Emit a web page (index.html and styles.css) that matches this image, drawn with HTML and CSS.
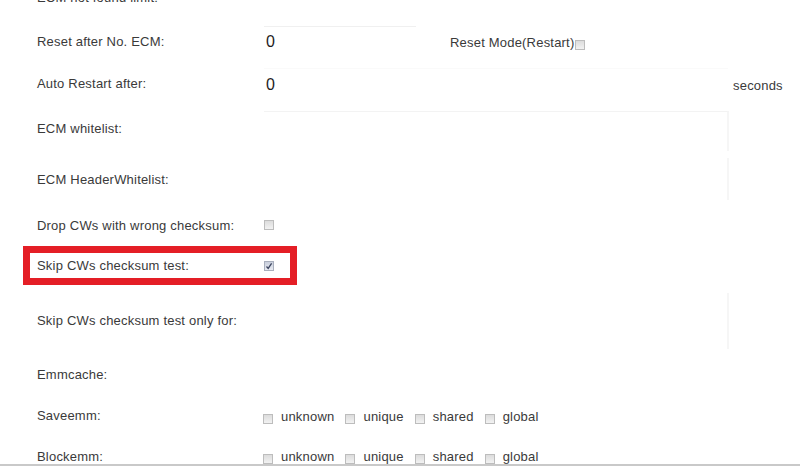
FILE: index.html
```html
<!DOCTYPE html>
<html>
<head>
<meta charset="utf-8">
<link rel="stylesheet" href="styles.css">
</head>
<body>
<div class="form">
  <div class="row r1"><span class="label">ECM not found limit:</span></div>
  <div class="row r2">
    <span class="label">Reset after No. ECM:</span>
    <span class="input short">0</span>
    <span class="mode">Reset Mode(Restart)<span class="cb low"></span></span>
  </div>
  <div class="row r3">
    <span class="label">Auto Restart after:</span>
    <span class="input long">0</span>
    <span class="unit">seconds</span>
  </div>
  <div class="row r4">
    <span class="label">ECM whitelist:</span>
    <span class="area a1"></span>
  </div>
  <div class="row r5">
    <span class="label">ECM HeaderWhitelist:</span>
    <span class="area a2"></span>
  </div>
  <div class="row r6">
    <span class="label">Drop CWs with wrong checksum:</span>
    <span class="cb"></span>
  </div>
  <div class="row r7">
    <div class="highlight">
      <span class="label">Skip CWs checksum test:</span>
      <span class="cb checked"><svg width="8" height="8" viewBox="0 0 8 8"><path d="M1.5 4.5 L3.2 6.4 L6.6 1.4" fill="none" stroke="#3d4660" stroke-width="1.3"/></svg></span>
    </div>
  </div>
  <div class="row r8">
    <span class="label">Skip CWs checksum test only for:</span>
    <span class="area a3"></span>
  </div>
  <div class="row r9"><span class="label">Emmcache:</span></div>
  <div class="row r10">
    <span class="label">Saveemm:</span>
    <div class="opts">
      <span class="opt"><span class="cb"></span>unknown</span>
      <span class="opt"><span class="cb"></span>unique</span>
      <span class="opt"><span class="cb"></span>shared</span>
      <span class="opt"><span class="cb"></span>global</span>
    </div>
  </div>
  <div class="row r11">
    <span class="label">Blockemm:</span>
    <div class="opts">
      <span class="opt"><span class="cb"></span>unknown</span>
      <span class="opt"><span class="cb"></span>unique</span>
      <span class="opt"><span class="cb"></span>shared</span>
      <span class="opt"><span class="cb"></span>global</span>
    </div>
  </div>
</div>
<div class="bottom-edge"></div>
</body>
</html>
```

FILE: styles.css
```css
html, body {
  margin: 0;
  padding: 0;
  background: #fff;
  overflow: hidden;
}
body {
  font-family: "Liberation Sans", Arial, sans-serif;
  font-size: 13px;
  color: #3a3a3a;
  letter-spacing: 0.2px;
}
.form {
  margin-top: -24px;
  padding-left: 37px;
}
.row {
  display: flex;
  align-items: center;
}
.label {
  flex: none;
  width: 227px;
  white-space: nowrap;
}
.r1 { height: 42px; }
.r2 { height: 46px; }
.r3 { height: 38px; }
.r4 { height: 52px; }
.r5 { height: 50px; }
.r6 { height: 42px; }
.r7 { height: 39px; }
.r8 { height: 70px; }
.r9 { height: 38px; }
.r10 { height: 44px; }
.r11 { height: 38px; }

.input {
  box-sizing: border-box;
  height: 30px;
  border-top: 1px solid #f0f0f0;
  font-size: 16px;
  color: #1e1e1e;
  letter-spacing: 0;
  display: flex;
  align-items: center;
  padding-left: 2px;
  padding-top: 2px;
}
.short { width: 152px; margin-top: -1px; }
.long { width: 464px; border-top-color: #fafafa; }
.mode {
  margin-left: 34px;
  display: flex;
  align-items: center;
  margin-top: 2px;
}
.mode .cb { margin-left: 1px; margin-top: 6px; }
.unit { margin-left: 5px; margin-top: 4px; }

.area {
  box-sizing: border-box;
  width: 465px;
  border-right: 2px solid #f6f6f6;
}
.a1 { height: 40px; border-top: 1px solid #f3f3f3; margin-top: 6px; }
.a2 { height: 42px; }
.a3 { height: 56px; margin-top: 2px; }

.cb {
  box-sizing: border-box;
  width: 10px;
  height: 10px;
  border: 1px solid #bdbdbd;
  background: linear-gradient(#dcdcdc, #f2f2f2);
  display: inline-flex;
  align-items: center;
  justify-content: center;
  flex: none;
}
.checked { background: linear-gradient(#c9cfdc, #e8ebf2); border-color: #a9afbd; }

.highlight {
  display: flex;
  align-items: center;
  box-sizing: border-box;
  margin-left: -14px;
  width: 274px;
  height: 39px;
  border: 7px solid #e41e26;
  padding-left: 7px;
}

.opts {
  display: flex;
  align-items: center;
  margin-left: -1px;
}
.opt {
  display: inline-flex;
  align-items: center;
  margin-right: 11px;
}
.opt .cb { margin-right: 8px; margin-top: 5px; }
.r10 .opts { margin-top: 2px; }

.bottom-edge {
  position: fixed;
  left: 0;
  right: 0;
  bottom: 0;
  height: 2px;
  background: #c9c9c9;
}
```
